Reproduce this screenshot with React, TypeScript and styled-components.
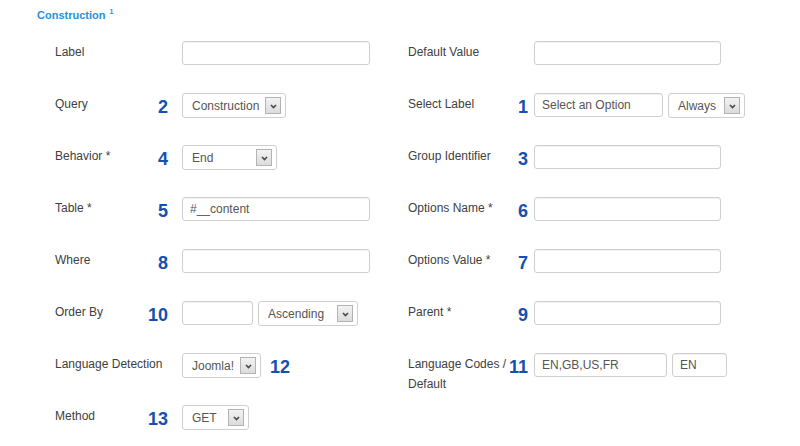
import React from 'react';
import styled, { createGlobalStyle } from 'styled-components';

const GlobalStyle = createGlobalStyle`
  body {
    margin: 0;
    background: #fff;
    font-family: 'Liberation Sans', Arial, sans-serif;
  }
`;

type Control =
  | { kind: 'input'; width: number; value?: string }
  | { kind: 'select'; width: number; value: string };

interface FieldDef {
  label: string;
  num?: string;
  after?: string;
  controls: Control[];
}

const leftFields: FieldDef[] = [
  { label: 'Label', controls: [{ kind: 'input', width: 188 }] },
  { label: 'Query', num: '2', controls: [{ kind: 'select', width: 104, value: 'Construction' }] },
  { label: 'Behavior *', num: '4', controls: [{ kind: 'select', width: 95, value: 'End' }] },
  { label: 'Table *', num: '5', controls: [{ kind: 'input', width: 188, value: '#__content' }] },
  { label: 'Where', num: '8', controls: [{ kind: 'input', width: 188 }] },
  {
    label: 'Order By',
    num: '10',
    controls: [
      { kind: 'input', width: 71 },
      { kind: 'select', width: 100, value: 'Ascending' },
    ],
  },
  {
    label: 'Language Detection',
    after: '12',
    controls: [{ kind: 'select', width: 79, value: 'Joomla!' }],
  },
  { label: 'Method', num: '13', controls: [{ kind: 'select', width: 67, value: 'GET' }] },
];

const rightFields: FieldDef[] = [
  { label: 'Default Value', controls: [{ kind: 'input', width: 187 }] },
  {
    label: 'Select Label',
    num: '1',
    controls: [
      { kind: 'input', width: 129, value: 'Select an Option' },
      { kind: 'select', width: 77, value: 'Always' },
    ],
  },
  { label: 'Group Identifier', num: '3', controls: [{ kind: 'input', width: 187 }] },
  { label: 'Options Name *', num: '6', controls: [{ kind: 'input', width: 187 }] },
  { label: 'Options Value *', num: '7', controls: [{ kind: 'input', width: 187 }] },
  { label: 'Parent *', num: '9', controls: [{ kind: 'input', width: 187 }] },
  {
    label: 'Language Codes / Default',
    num: '11',
    controls: [
      { kind: 'input', width: 133, value: 'EN,GB,US,FR' },
      { kind: 'input', width: 55, value: 'EN' },
    ],
  },
];

const Chevron = () => (
  <svg width="7" height="5" viewBox="0 0 7 5">
    <polyline points="1,1 3.5,3.5 6,1" fill="none" stroke="#4a4a4a" strokeWidth="1.7" />
  </svg>
);

const Field: React.FC<{ field: FieldDef; side: 'left' | 'right' }> = ({ field, side }) => (
  <Row>
    <Label side={side}>{field.label}</Label>
    <Num side={side}>{field.num}</Num>
    <Controls>
      {field.controls.map((c, i) =>
        c.kind === 'input' ? (
          <TextInput key={i} w={c.width} defaultValue={c.value ?? ''} readOnly />
        ) : (
          <FakeSelect key={i} w={c.width}>
            <span>{c.value}</span>
            <ArrowBox>
              <Chevron />
            </ArrowBox>
          </FakeSelect>
        )
      )}
      {field.after && <AfterNum>{field.after}</AfterNum>}
    </Controls>
  </Row>
);

const App: React.FC = () => (
  <>
    <GlobalStyle />
    <Page>
      <Title>
        Construction <sup>1</sup>
      </Title>
      <Columns>
        <Column>
          {leftFields.map((f) => (
            <Field key={f.label} field={f} side="left" />
          ))}
        </Column>
        <Column>
          {rightFields.map((f) => (
            <Field key={f.label} field={f} side="right" />
          ))}
        </Column>
      </Columns>
    </Page>
  </>
);

export default App;

const Page = styled.div`
  width: 800px;
  height: 446px;
  padding: 8px 0 0 37px;
  box-sizing: border-box;
  overflow: hidden;
`;

const Title = styled.div`
  font-size: 11px;
  line-height: 14px;
  font-weight: bold;
  color: #2b8fd6;
  margin-bottom: 19px;

  sup {
    font-size: 7px;
    vertical-align: top;
    line-height: 8px;
    margin-left: 1px;
  }
`;

const Columns = styled.div`
  display: grid;
  grid-template-columns: 353px 1fr;
  padding-left: 18px;
`;

const Column = styled.div`
  display: flex;
  flex-direction: column;
`;

const Row = styled.div`
  display: flex;
  align-items: flex-start;
  height: 52px;
`;

const Label = styled.div<{ side: 'left' | 'right' }>`
  flex: 0 0 ${(p) => (p.side === 'left' ? 93 : 100)}px;
  min-width: 0;
  font-size: 12px;
  line-height: 20px;
  color: #404040;
  white-space: ${(p) => (p.side === 'left' ? 'nowrap' : 'normal')};
  margin-top: 1px;
`;

const Num = styled.div<{ side: 'left' | 'right' }>`
  flex: 0 0 20px;
  margin-right: ${(p) => (p.side === 'left' ? 14 : 6)}px;
  text-align: right;
  font-size: 18px;
  font-weight: bold;
  line-height: 24px;
  margin-top: 2px;
  color: #1450b2;
`;

const AfterNum = styled.div`
  font-size: 18px;
  font-weight: bold;
  line-height: 24px;
  margin: 2px 0 0 4px;
  color: #1450b2;
`;

const Controls = styled.div`
  display: flex;
  gap: 5px;
`;

const TextInput = styled.input<{ w: number }>`
  width: ${(p) => p.w}px;
  height: 24px;
  box-sizing: border-box;
  border: 1px solid #cfcfcf;
  border-radius: 3px;
  box-shadow: inset 0 1px 1px rgba(0, 0, 0, 0.06);
  padding: 0 7px;
  font-family: 'Liberation Sans', Arial, sans-serif;
  font-size: 12px;
  color: #555;
  outline: none;
  background: #fff;
`;

const FakeSelect = styled.div<{ w: number }>`
  width: ${(p) => p.w}px;
  height: 25px;
  box-sizing: border-box;
  border: 1px solid #cfcfcf;
  border-radius: 3px;
  background: #fff;
  display: flex;
  align-items: center;
  justify-content: space-between;
  padding: 0 4px 0 9px;
  font-size: 12px;
  color: #555;
  white-space: nowrap;
`;

const ArrowBox = styled.div`
  width: 16px;
  height: 17px;
  box-sizing: border-box;
  border: 1px solid #b3b3b3;
  background: linear-gradient(#f2f2f2, #dcdcdc);
  display: flex;
  align-items: center;
  justify-content: center;
  padding-top: 1px;
`;
